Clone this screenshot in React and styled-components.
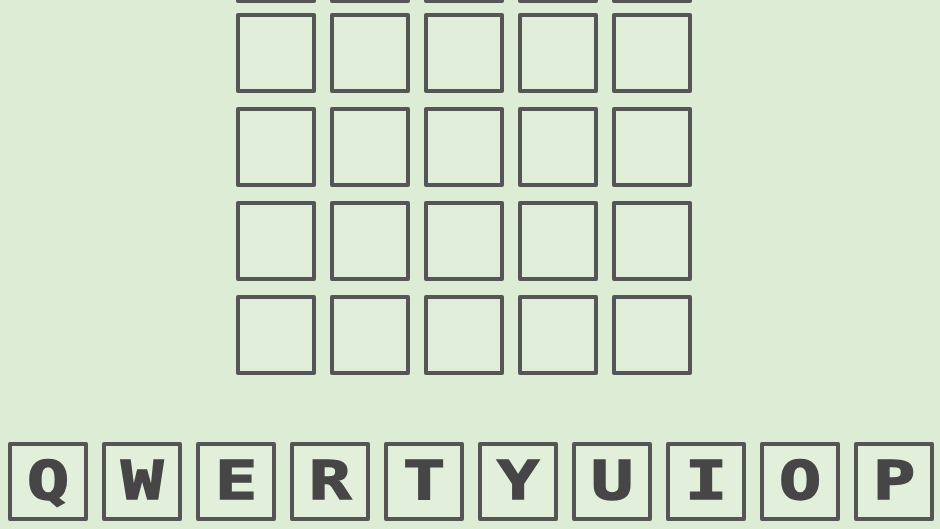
import React from "react";
import styled, { createGlobalStyle } from "styled-components";

const GlobalStyle = createGlobalStyle`
  html, body {
    margin: 0;
    padding: 0;
    background: #ddecd5;
    overflow: hidden;
  }
  body {
    font-family: "DejaVu Sans Mono", "Liberation Mono", monospace;
  }
`;

const Screen = styled.div`
  width: 940px;
  height: 529px;
  overflow: hidden;
  background: #ddecd5;
  display: flex;
  flex-direction: column;
  align-items: flex-start;
`;

const Board = styled.div`
  display: grid;
  grid-template-columns: repeat(5, 80px);
  grid-template-rows: 76px repeat(4, 80px);
  gap: 14px;
  margin-top: -77px;
  margin-left: 236px;
`;

const Tile = styled.div`
  box-sizing: border-box;
  height: 80px;
  border: 4px solid #555555;
  border-radius: 2px;
  background: #e0eed9;
`;

const Keyboard = styled.div`
  display: flex;
  gap: 14px;
  margin-top: 67px;
  margin-left: 8px;
`;

const Key = styled.div`
  box-sizing: border-box;
  width: 80px;
  height: 79px;
  border: 4px solid #555555;
  border-radius: 2px;
  background: #e2f0db;
  display: flex;
  align-items: center;
  justify-content: center;
  color: #464646;
  padding-bottom: 2px;
`;

const Glyph = styled.span`
  display: inline-block;
  font-family: "DejaVu Sans Mono", "Liberation Mono", monospace;
  font-weight: 700;
  font-size: 54px;
  line-height: 1;
  transform: scaleX(1.3);
  -webkit-text-stroke: 1.5px #464646;
`;

const rows = 5;
const letters = ["Q", "W", "E", "R", "T", "Y", "U", "I", "O", "P"];

export default function App() {
  return (
    <>
      <GlobalStyle />
      <Screen>
        <Board>
          {Array.from({ length: rows * 5 }).map((_, i) => (
            <Tile key={i} />
          ))}
        </Board>
        <Keyboard>
          {letters.map((l) => (
            <Key key={l}>
              <Glyph>{l}</Glyph>
            </Key>
          ))}
        </Keyboard>
      </Screen>
    </>
  );
}
